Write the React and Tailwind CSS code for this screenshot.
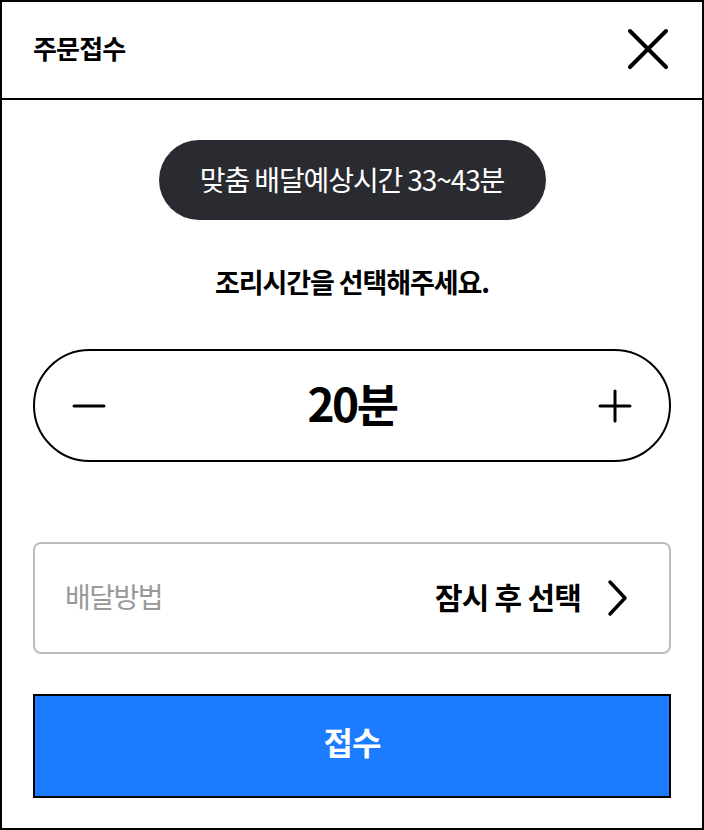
export default function App() {
  return (
    <div
      className="w-[704px] h-[830px] bg-white border-2 border-black flex flex-col"
      style={{ fontFamily: '"Noto Sans CJK KR", "Noto Sans", sans-serif' }}
    >
      {/* Header */}
      <header className="h-[98px] shrink-0 border-b-2 border-black flex items-center justify-between pl-[31px] pr-[32px]">
        <h1 className="text-[26px] leading-none font-bold tracking-[-0.8px] text-black -mt-[4px]">주문접수</h1>
        <button className="w-[44px] h-[44px] flex items-center justify-center -mt-[2px]">
          <svg width="44" height="44" viewBox="0 0 44 44" fill="none" stroke="black" strokeWidth="4" strokeLinecap="round">
            <path d="M4 4 L40 40 M40 4 L4 40" />
          </svg>
        </button>
      </header>

      <div className="flex flex-col items-center px-[31px] pt-[40px]">
        {/* Estimated time pill */}
        <div className="h-[80px] w-[387px] rounded-full bg-[#2a2b30] flex items-center justify-center">
          <span className="text-white text-[28px] leading-none tracking-[-1.1px] mb-[2px]">맞춤 배달예상시간 33~43분</span>
        </div>

        <p className="mt-[48px] text-[27px] font-bold tracking-[-1.1px] text-black leading-none">조리시간을 선택해주세요.</p>

        {/* Cooking time stepper */}
        <div className="mt-[54px] w-full h-[113px] rounded-full border-2 border-black flex items-center justify-between px-[36px]">
          <button className="w-[36px] h-[36px] flex items-center justify-center">
            <svg width="34" height="34" viewBox="0 0 34 34" stroke="black" strokeWidth="3" strokeLinecap="round">
              <path d="M2 17 H32" />
            </svg>
          </button>
          <span className="text-[46px] leading-none font-bold tracking-[-2.5px] text-black mb-[8px]">20분</span>
          <button className="w-[36px] h-[36px] flex items-center justify-center">
            <svg width="34" height="34" viewBox="0 0 34 34" stroke="black" strokeWidth="3" strokeLinecap="round">
              <path d="M2 17 H32 M17 2 V32" />
            </svg>
          </button>
        </div>

        {/* Delivery method */}
        <div className="mt-[80px] w-full h-[112px] rounded-[8px] border-2 border-[#bdbdbd] flex items-center justify-between pl-[30px] pr-[40px]">
          <span className="text-[28px] leading-none text-[#999999] tracking-[-1.5px] mb-[4px]">배달방법</span>
          <div className="flex items-center gap-[26px]">
            <span className="text-[30px] leading-none font-bold text-black tracking-[-0.8px] mb-[4px]">잠시 후 선택</span>
            <svg width="22" height="38" viewBox="0 0 22 38" fill="none" stroke="black" strokeWidth="3.5" strokeLinecap="round" strokeLinejoin="round">
              <path d="M3 3 L18 19 L3 35" />
            </svg>
          </div>
        </div>

        {/* Submit */}
        <button className="mt-[40px] w-full h-[104px] bg-[#1c7cff] border-2 border-black flex items-center justify-center">
          <span className="text-white text-[32px] leading-none font-bold tracking-[-1px] mb-[10px]">접수</span>
        </button>
      </div>
    </div>
  );
}
